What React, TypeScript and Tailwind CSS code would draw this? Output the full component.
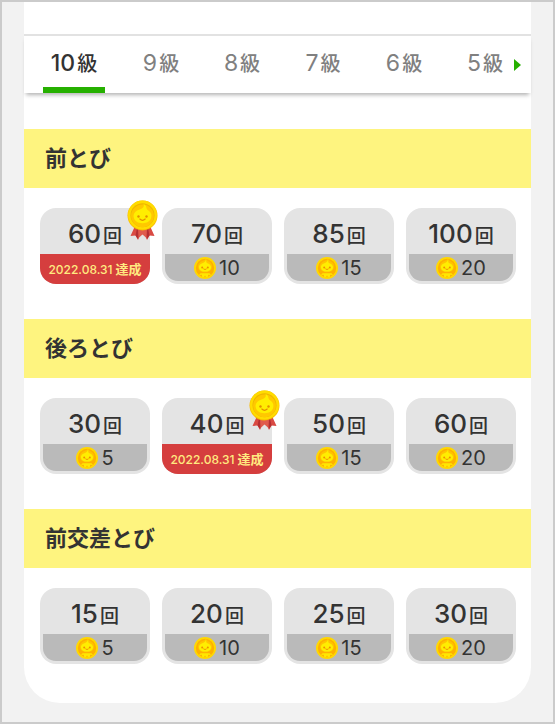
import React, { useState } from 'react';

interface Goal {
  count: number;
  coins: number;
  achieved?: string;
}

interface Section {
  title: string;
  goals: Goal[];
}

const grades = ['10', '9', '8', '7', '6', '5'];

const sections: Section[] = [
  {
    title: '前とび',
    goals: [
      { count: 60, coins: 5, achieved: '2022.08.31' },
      { count: 70, coins: 10 },
      { count: 85, coins: 15 },
      { count: 100, coins: 20 },
    ],
  },
  {
    title: '後ろとび',
    goals: [
      { count: 30, coins: 5 },
      { count: 40, coins: 10, achieved: '2022.08.31' },
      { count: 50, coins: 15 },
      { count: 60, coins: 20 },
    ],
  },
  {
    title: '前交差とび',
    goals: [
      { count: 15, coins: 5 },
      { count: 20, coins: 10 },
      { count: 25, coins: 15 },
      { count: 30, coins: 20 },
    ],
  },
];

export default function App() {
  const [grade, setGrade] = useState('10');

  return (
    <div className="min-h-screen border-2 border-[#cbcbcb] bg-[#f2f2f2] px-[22px] pb-[19px] font-['Inter','Noto_Sans_CJK_JP',sans-serif] text-[#333]">
      <main className="rounded-b-[36px] bg-white pt-8 pb-[39px]">
        <nav className="flex items-stretch border-t-2 border-[#e2e2e2] pl-[19px] shadow-[0_4px_4px_-2px_rgba(0,0,0,0.3)]">
          <div className="flex gap-[31px]">
            {grades.map((g) => (
              <button
                key={g}
                type="button"
                onClick={() => setGrade(g)}
                className={
                  g === grade
                    ? 'flex h-[57px] w-[62px] items-baseline justify-center gap-0.5 border-b-6 border-[#26b000] pt-3 text-[23px] leading-[30px] font-medium text-[#333]'
                    : 'flex h-[57px] w-[50px] items-baseline justify-center gap-0.5 border-b-6 border-transparent pt-3 text-[23px] leading-[30px] text-[#808080]'
                }
              >
                {g}
                <span className="text-[20px] font-medium">級</span>
              </button>
            ))}
          </div>
          <button type="button" aria-label="次の級" className="pl-1">
            <svg width="7" height="12" viewBox="0 0 7 12" className="block">
              <path d="M0 0 L7 6 L0 12 Z" fill="#26b000" />
            </svg>
          </button>
        </nav>

        <div className="flex flex-col gap-[35px] pt-9">
          {sections.map((section) => (
            <section key={section.title}>
              <h2 className="bg-[#fef47f] px-[21px] py-[14px] text-[22px] leading-[31px] font-bold">
                {section.title}
              </h2>
              <div className="grid grid-cols-4 gap-3 pt-5 pr-[15px] pl-4">
                {section.goals.map((goal) => (
                  <GoalCard key={goal.count} goal={goal} />
                ))}
              </div>
            </section>
          ))}
        </div>
      </main>
    </div>
  );
}

function GoalCard({ goal }: { goal: Goal }) {
  return (
    <button type="button" className="relative flex h-[76px] flex-col rounded-2xl bg-[#e4e4e4]">
      <span className="flex h-[46px] w-full items-baseline justify-center gap-0.5 pt-2 text-[26px] leading-9 font-medium">
        {goal.count}
        <span className="text-[19px]">回</span>
      </span>
      {goal.achieved ? (
        <>
          <span className="flex h-[30px] w-full items-baseline justify-center gap-[3px] rounded-b-2xl bg-[#d53e3e] pt-[3px] text-[12px] leading-6 font-medium text-[#ffea80]">
            {goal.achieved}
            <span className="text-[13px] font-bold">達成</span>
          </span>
          <span className="absolute -top-2 -right-2">
            <Medal />
          </span>
        </>
      ) : (
        <span className="flex w-full px-[3px]">
          <span className="flex h-[27px] w-full items-center justify-center gap-[3px] rounded-b-[13px] bg-[#bababa] text-[20px]">
            <Coin />
            {goal.coins}
          </span>
        </span>
      )}
    </button>
  );
}

function Coin() {
  return (
    <svg width="22" height="22" viewBox="0 0 22 22" className="block">
      <circle cx="11" cy="11" r="11" fill="#ffd900" />
      <circle cx="11" cy="11" r="9.2" fill="#ffb000" />
      <path
        d="M12 1.2 C12.2 3.2 14 3.8 15.4 4.8 C17.8 6.4 18.6 8.6 17.8 11.2 C17 14 14.6 15.2 11 15.2 C7.4 15.2 5 14 4.2 11.2 C3.4 8.6 4.6 6.2 7 4.8 C9.2 3.6 11.4 3.2 12 1.2 Z"
        fill="#ffc400"
      />
      <path
        d="M12 1.8 C12.6 4.4 11.6 5.4 13.4 6.2 C16 7.2 17.4 8.8 17 11 C16.4 13.6 14 14.6 11 14.6 C8 14.6 5.6 13.6 5 11 C4.6 8.8 6 7 8.4 6.2 C10.8 5.4 12 4.2 12 1.8 Z"
        fill="#ffee00"
      />
      <path d="M6.6 16.2 L15.4 16.2 L17 18 L14.2 17.8 L13.8 20 H11.8 L11 18.2 L10.2 20 H8.2 L7.8 17.8 L5 18 Z" fill="#ffe800" />
      <circle cx="8.2" cy="10.4" r="1" fill="#ee8f00" />
      <circle cx="13.8" cy="10.4" r="1" fill="#ee8f00" />
      <path d="M9.6 12 Q11 13.4 12.4 12" fill="none" stroke="#ee8f00" strokeWidth="0.9" strokeLinecap="round" />
    </svg>
  );
}

function Medal() {
  return (
    <svg width="31" height="41" viewBox="0 0 31 41" className="block">
      <path d="M8 26 L3.5 36 L8.5 35.5 L11 40 L16 28 Z" fill="#d94a43" />
      <path d="M23 26 L27.5 36 L22.5 35.5 L20 40 L15 28 Z" fill="#d94a43" />
      <path d="M10 28 L14 30 L11 39 L8.5 35.5 Z M21 28 L17 30 L20 39 L22.5 35.5 Z" fill="#b52e32" />
      <path d="M11 29 H20 L19.5 38 L15.5 34.5 L11.5 38 Z" fill="#e05a4c" />
      <circle cx="15.5" cy="15.5" r="15" fill="#f8b900" />
      <circle cx="15.5" cy="15" r="14.5" fill="#ffdc00" />
      <circle cx="15.5" cy="15.3" r="12" fill="#efb600" />
      <circle cx="15.5" cy="15.8" r="11.4" fill="#ffc800" />
      <path
        d="M16.5 4 C20.4 6.2 18.6 8 20.6 10 C23.6 12 25 14 24.2 17.5 C23.2 21.5 20 23.2 15.5 23.2 C11 23.2 7.8 21.5 6.8 17.5 C6 14 8 11.4 11.4 10 C14.8 8.8 18 7.2 16.5 4 Z"
        fill="#ffee00"
      />
      <circle cx="11.5" cy="16.5" r="1.2" fill="#e28f00" />
      <circle cx="19.5" cy="16.5" r="1.2" fill="#e28f00" />
      <path d="M12.8 19 Q15.5 21.6 18.2 19" fill="none" stroke="#e28f00" strokeWidth="1.1" strokeLinecap="round" />
    </svg>
  );
}
